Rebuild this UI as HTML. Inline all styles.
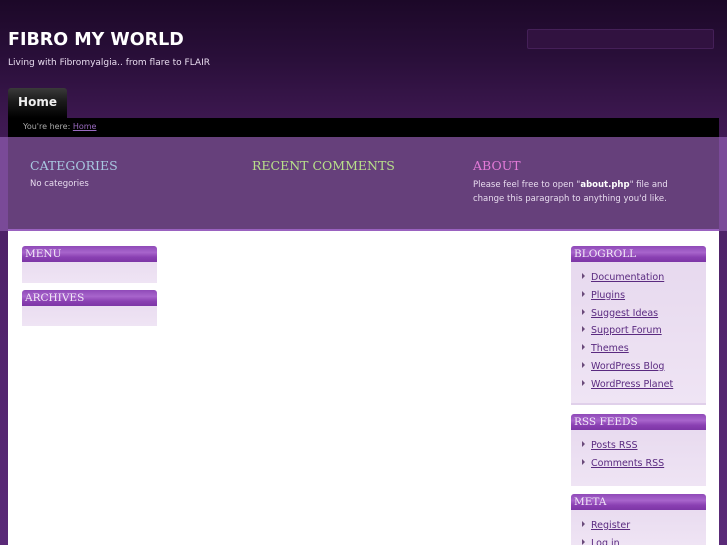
<!DOCTYPE html>
<html style="overflow:hidden;height:545px"><head><meta charset="utf-8"><style>
*{margin:0;padding:0;box-sizing:border-box}
body{width:727px;height:545px;overflow:hidden;position:relative;font-family:"DejaVu Sans","Liberation Sans",sans-serif;background:linear-gradient(#1c0828 0px,#2a0f3a 60px,#3d1850 120px,#4e2268 231px,#5a2a78 545px)}
.abs{position:absolute}
h1{position:absolute;left:8px;top:30px;font-size:17.5px;font-weight:bold;color:#fff;letter-spacing:0}
.tag{left:8px;top:58px;font-size:9px;color:#e8dcef}
.search{left:527px;top:29px;width:187px;height:20px;background:#311240;border:1px solid #452058;border-radius:2px}
.tab{left:8px;top:88px;width:59px;height:30px;background:linear-gradient(#3a3a3a,#1a1a1a 45%,#000);border-radius:3px 3px 0 0;color:#eee;font-size:12px;font-weight:bold;text-align:center;line-height:28px}
.bar{left:8px;top:118px;width:711px;height:19px;background:#000;font-size:8px;color:#aaa;padding-left:15px;line-height:17px}
.bar a{color:#9a6ac0;text-decoration:underline}
.band{left:0;top:137px;width:727px;height:94px;background:#66407b;border-bottom:2px solid #9a62c0}
.band .l{position:absolute;left:0;top:0;width:8px;height:94px;background:#7a4a98}
.band .r{position:absolute;right:0;top:0;width:8px;height:94px;background:#7a4a98}
.bh{font-family:"DejaVu Serif","Liberation Serif",serif;font-size:12.5px;position:absolute;top:158px}
.bt{position:absolute;font-size:8.5px;color:#e8dcef;line-height:14px}
.main{left:8px;top:231px;width:711px;height:314px;background:#fff}
.box{position:absolute;width:135px;background:linear-gradient(#e6d8ee,#efe4f4);border-radius:3px 3px 0 0}
.box .h{height:16px;background:linear-gradient(#8f4ab8,#a865cc 40%,#8a40b2 70%,#7d36a6);color:#f3eaf8;font-family:"DejaVu Serif","Liberation Serif",serif;font-size:10.5px;padding-left:3px;line-height:16px;border-radius:3px 3px 0 0}
.box ul{list-style:none;padding:9px 0 0 11px}
.box li{font-size:9.5px;height:17.8px;line-height:13px}
.box li:before{content:"";display:inline-block;border-left:3px solid #6a4a7a;border-top:3px solid transparent;border-bottom:3px solid transparent;margin-right:6px;vertical-align:1px}
.box a{color:#5a2a80;text-decoration:underline}
</style></head><body>
<h1>FIBRO MY WORLD</h1>
<div class="abs tag">Living with Fibromyalgia.. from flare to FLAIR</div>
<div class="abs search"></div>
<div class="abs tab">Home</div>
<div class="abs bar">You're here: <a>Home</a></div>
<div class="abs band"><div class="l"></div><div class="r"></div></div>
<div class="bh" style="left:30px;color:#a8c8e0">CATEGORIES</div>
<div class="bt" style="left:30px;top:177px">No categories</div>
<div class="bh" style="left:252px;color:#b8e08a">RECENT COMMENTS</div>
<div class="bh" style="left:473px;color:#e37ad8">ABOUT</div>
<div class="bt" style="left:473px;top:178px">Please feel free to open "<b style="color:#fff">about.php</b>" file and<br>change this paragraph to anything you'd like.</div>
<div class="abs main"></div>
<div class="box" style="left:22px;top:246px;height:37px"><div class="h">MENU</div></div>
<div class="box" style="left:22px;top:290px;height:36px"><div class="h">ARCHIVES</div></div>
<div class="box" style="left:571px;top:246px;height:159px;border-bottom:2px solid #e0d0ea"><div class="h">BLOGROLL</div><ul><li><a>Documentation</a></li><li><a>Plugins</a></li><li><a>Suggest Ideas</a></li><li><a>Support Forum</a></li><li><a>Themes</a></li><li><a>WordPress Blog</a></li><li><a>WordPress Planet</a></li></ul></div>
<div class="box" style="left:571px;top:414px;height:72px"><div class="h">RSS FEEDS</div><ul><li><a>Posts RSS</a></li><li><a>Comments RSS</a></li></ul></div>
<div class="box" style="left:571px;top:494px;height:51px"><div class="h">META</div><ul><li><a>Register</a></li><li><a>Log in</a></li></ul></div>
</body></html>
